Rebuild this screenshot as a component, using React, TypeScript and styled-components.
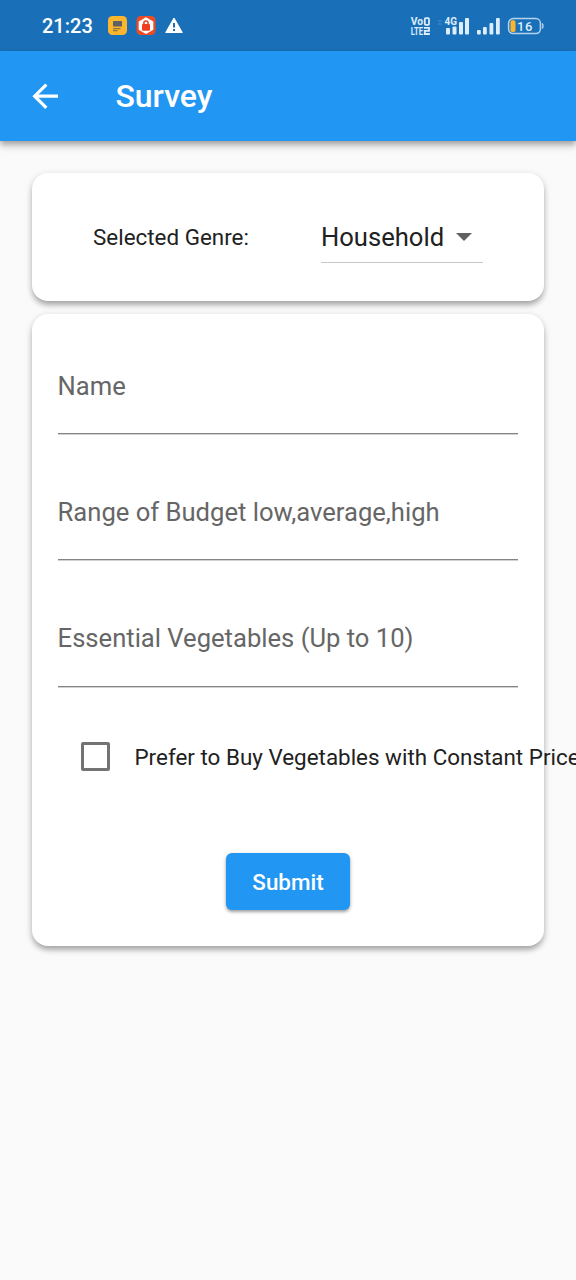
import React from "react";
import styled, { createGlobalStyle } from "styled-components";

const GlobalStyle = createGlobalStyle`
  * { box-sizing: border-box; }
  html, body { margin: 0; background: #fafafa; overflow-x: hidden; }
  body { font-family: Roboto, "Noto Sans", sans-serif; color: #212121; }
`;

const Screen = styled.div`
  width: 576px;
  height: 1280px;
  overflow: hidden;
  background: #fafafa;
`;

const StatusBar = styled.div`
  height: 51px;
  background: #1a70b8;
  color: #fff;
  display: flex;
  justify-content: space-between;
  padding: 0 32px 0 42px;
`;

const StatusGroup = styled.div`
  display: flex;
  align-items: center;
  height: 52px;
`;

const Clock = styled.span`
  width: 66px;
  font: 500 20px/24px Roboto, sans-serif;
  letter-spacing: 0;
`;

const AppBar = styled.header`
  position: relative;
  height: 90px;
  background: #2196f3;
  color: #fff;
  display: flex;
  align-items: center;
  padding-left: 25.6px;
  box-shadow: 0 3px 6px rgba(0, 0, 0, 0.3), 0 6px 9px rgba(0, 0, 0, 0.1);
`;

const Title = styled.h1`
  margin: 0 0 0 51.4px;
  font-size: 32px;
  line-height: 38px;
  font-weight: 500;
`;

const Content = styled.main`
  padding: 31.5px 32px 0;
  display: flex;
  flex-direction: column;
  gap: 12.5px;
`;

const Card = styled.section`
  background: #fff;
  border-radius: 16px;
  box-shadow: 0 5px 6px -2px rgba(0, 0, 0, 0.22), 0 3px 6px rgba(0, 0, 0, 0.16),
    0 2px 10px rgba(0, 0, 0, 0.08);
`;

const GenreCard = styled(Card)`
  height: 128.5px;
  padding: 0 61px;
  display: flex;
  justify-content: space-between;
  align-items: center;
`;

const FormCard = styled(Card)`
  height: 632px;
  padding: 0 25.6px;
  display: flex;
  flex-direction: column;
`;

const BodyText = styled.span`
  font-size: 22.4px;
  line-height: 26px;
  letter-spacing: 0.01px;
  white-space: nowrap;
`;

const Dropdown = styled.div`
  width: 162px;
  height: 52px;
  margin-top: 1px;
  border-bottom: 1px solid #c8c8c8;
  display: flex;
  align-items: center;
  font-size: 25.6px;
  svg { margin-left: 12px; flex: none; }
`;

const Field = styled.label<{ $first?: boolean }>`
  height: ${(p) => (p.$first ? 120.5 : 126.4)}px;
  border-bottom: 1px solid #858585;
  box-shadow: 0 1px 0 rgba(0, 0, 0, 0.18);
  display: flex;
  align-items: flex-end;
  padding-bottom: 32.4px;
  font-size: 25.6px;
  line-height: 30px;
  color: #666;
`;

const CheckRow = styled.div`
  margin-top: 55px;
  padding-left: 23.9px;
  height: 30px;
  display: flex;
  align-items: center;
  gap: 24px;
`;

const CheckBox = styled.span`
  flex: none;
  width: 29px;
  height: 29px;
  border: 3px solid #737373;
  border-radius: 2px;
`;

const SubmitButton = styled.button`
  align-self: center;
  margin-top: 81px;
  width: 124px;
  height: 57.6px;
  padding: 0;
  border: 0;
  border-radius: 6px;
  background: #2196f3;
  color: #fff;
  font: 500 22.4px/26px Roboto, sans-serif;
  box-shadow: 0 2px 3px rgba(0, 0, 0, 0.3), 0 1px 5px rgba(0, 0, 0, 0.12);
`;

const NoticeIcons = () => (
  <svg width="76" height="20" viewBox="0 0 76 20">
    <rect x="0" y="0" width="19" height="19" rx="4.5" fill="#fbb62d" />
    <rect x="5" y="5" width="9" height="5.6" rx="0.6" fill="#5c6263" />
    <path d="M5 12.6h7.500M5 14.600h4.500" stroke="#8b7448" strokeWidth="1.2" />
    <rect x="28.5" y="0" width="19" height="19" rx="4.5" fill="#ee4a23" />
    <path d="M38 1.2l7.3 4.2v8.4L38 18l-7.3-4.2V5.4z" fill="#fff" />
    <rect x="34" y="8" width="8" height="6.8" rx="1" fill="#ee3f20" />
    <path d="M35.9 9V7a2.1 2.1 0 0 1 4.200 0v2" fill="none" stroke="#ee3f20" strokeWidth="1.5" />
    <path d="M66 2l8.3 14.500H57.700z" fill="#fff" stroke="#fff" strokeLinejoin="round" />
    <path d="M66 7v4.500M66 13v2" stroke="#1a70b8" strokeWidth="2" />
  </svg>
);

const PhoneIcons = () => (
  <svg width="134" height="22" viewBox="0 0 134 22" fill="#dcedfb" fontFamily="Roboto, sans-serif">
    <text x="0.8" y="10.4" fontSize="11" fontWeight="700" textLength="12.4" lengthAdjust="spacingAndGlyphs">Vo</text>
    <text x="0.8" y="19.8" fontSize="11" fontWeight="700" textLength="12.4" lengthAdjust="spacingAndGlyphs">LTE</text>
    <rect x="14.8" y="3.2" width="4.2" height="6.6" rx="1" fill="none" stroke="#dcedfb" strokeWidth="1.8" />
    <path d="M14 12.8h5v3.100h-4.200v3.100h5" fill="none" stroke="#dcedfb" strokeWidth="1.8" />
    <path d="M28 6h4M28 9h4" stroke="#5b9dd3" strokeWidth="1" opacity="0.7" />
    <text x="34.5" y="10" fontSize="11" fontWeight="700" textLength="12.5" lengthAdjust="spacingAndGlyphs">4G</text>
    <rect x="36" y="13" width="4" height="6.5" rx="1" />
    <rect x="42.5" y="11.5" width="4" height="8" rx="1" />
    <rect x="49" y="7" width="4" height="12.5" rx="1" />
    <rect x="55" y="3" width="4" height="16.5" rx="1" />
    <rect x="67" y="15" width="3.8" height="4.5" rx="1" />
    <rect x="73" y="12" width="3.8" height="7.5" rx="1" />
    <rect x="79.5" y="8" width="3.8" height="11.5" rx="1" />
    <rect x="86" y="3" width="3.8" height="16.5" rx="1" />
    <rect x="98.6" y="3.6" width="31.8" height="15" rx="4.5" fill="none" stroke="#b5d3ec" strokeWidth="1.5" />
    <path d="M132 8.500q2 2.500 0 5" fill="none" stroke="#b5d3ec" strokeWidth="1.4" />
    <rect x="100.5" y="5.3" width="5" height="11.6" rx="1.6" fill="#fbb62d" />
    <text x="107" y="15.6" fontSize="13" fontWeight="500" textLength="15.5">16</text>
  </svg>
);

const BackArrow = () => (
  <svg width="38.4" height="38.4" viewBox="0 0 24 24" fill="#fff">
    <path d="M20 11H7.83l5.590-5.590L12 4l-8 8 8 8 1.410-1.410L7.830 13H20v-2z" />
  </svg>
);

export default function App() {
  return (
    <Screen>
      <GlobalStyle />
      <StatusBar>
        <StatusGroup>
          <Clock>21:23</Clock>
          <NoticeIcons />
        </StatusGroup>
        <StatusGroup>
          <PhoneIcons />
        </StatusGroup>
      </StatusBar>
      <AppBar>
        <BackArrow />
        <Title>Survey</Title>
      </AppBar>
      <Content>
        <GenreCard>
          <BodyText>Selected Genre:</BodyText>
          <Dropdown>
            Household
            <svg width="16" height="8" viewBox="0 0 16 8">
              <path d="M0 0h16L8 8z" fill="#616161" />
            </svg>
          </Dropdown>
        </GenreCard>
        <FormCard>
          <Field $first>Name</Field>
          <Field>Range of Budget low,average,high</Field>
          <Field>Essential Vegetables (Up to 10)</Field>
          <CheckRow>
            <CheckBox role="checkbox" aria-checked="false" />
            <BodyText>Prefer to Buy Vegetables with Constant Price</BodyText>
          </CheckRow>
          <SubmitButton type="button">Submit</SubmitButton>
        </FormCard>
      </Content>
    </Screen>
  );
}
